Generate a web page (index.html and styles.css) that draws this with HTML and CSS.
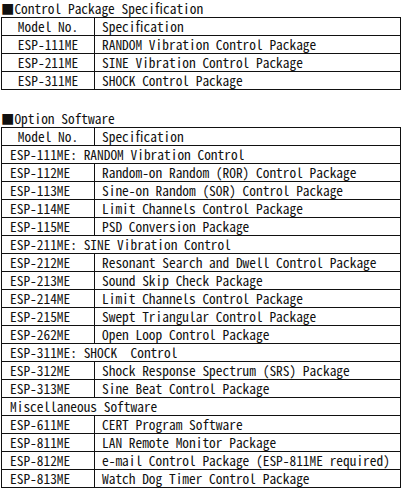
FILE: index.html
```html
<!DOCTYPE html>
<html>
<head>
<meta charset="utf-8">
<link rel="stylesheet" href="styles.css">
</head>
<body>
<div class="page">
  <div class="title">■Control Package Specification</div>
  <table class="spec spec-a">
    <tr><td class="code c">Model No.</td><td class="desc">Specification</td></tr>
    <tr><td class="code c">ESP-111ME</td><td class="desc">RANDOM Vibration Control Package</td></tr>
    <tr><td class="code c">ESP-211ME</td><td class="desc">SINE Vibration Control Package</td></tr>
    <tr><td class="code c">ESP-311ME</td><td class="desc">SHOCK Control Package</td></tr>
  </table>

  <div class="title title-b">■Option Software</div>
  <table class="spec spec-b">
    <tr><td class="code c">Model No.</td><td class="desc">Specification</td></tr>
    <tr><td class="group" colspan="2">ESP-111ME: RANDOM Vibration Control</td></tr>
    <tr><td class="code">ESP-112ME</td><td class="desc">Random-on Random (ROR) Control Package</td></tr>
    <tr><td class="code">ESP-113ME</td><td class="desc">Sine-on Random (SOR) Control Package</td></tr>
    <tr><td class="code">ESP-114ME</td><td class="desc">Limit Channels Control Package</td></tr>
    <tr><td class="code">ESP-115ME</td><td class="desc">PSD Conversion Package</td></tr>
    <tr><td class="group" colspan="2">ESP-211ME: SINE Vibration Control</td></tr>
    <tr><td class="code">ESP-212ME</td><td class="desc">Resonant Search and Dwell Control Package</td></tr>
    <tr><td class="code">ESP-213ME</td><td class="desc">Sound Skip Check Package</td></tr>
    <tr><td class="code">ESP-214ME</td><td class="desc">Limit Channels Control Package</td></tr>
    <tr><td class="code">ESP-215ME</td><td class="desc">Swept Triangular Control Package</td></tr>
    <tr><td class="code">ESP-262ME</td><td class="desc">Open Loop Control Package</td></tr>
    <tr><td class="group" colspan="2">ESP-311ME: SHOCK&nbsp; Control</td></tr>
    <tr><td class="code">ESP-312ME</td><td class="desc">Shock Response Spectrum (SRS) Package</td></tr>
    <tr><td class="code">ESP-313ME</td><td class="desc">Sine Beat Control Package</td></tr>
    <tr><td class="group" colspan="2">Miscellaneous Software</td></tr>
    <tr><td class="code">ESP-611ME</td><td class="desc">CERT Program Software</td></tr>
    <tr><td class="code">ESP-811ME</td><td class="desc">LAN Remote Monitor Package</td></tr>
    <tr><td class="code">ESP-812ME</td><td class="desc">e-mail Control Package (ESP-811ME required)</td></tr>
    <tr><td class="code">ESP-813ME</td><td class="desc">Watch Dog Timer Control Package</td></tr>
  </table>
</div>
</body>
</html>
```

FILE: styles.css
```css
html, body {
  margin: 0;
  padding: 0;
  background: #fff;
}
body {
  font-family: "Noto Sans CJK JP", "DejaVu Sans Mono", monospace;
  font-feature-settings: "hwid" 1;
  font-size: 13.4px;
  color: #111;
}
.page {
  padding: 0 2px 0 1px;
}
.title {
  height: 17px;
  line-height: 17px;
  white-space: pre;
}
.title-b {
  margin-top: 20px;
}
.spec {
  border-collapse: collapse;
  width: 100%;
  table-layout: fixed;
}
.spec td {
  border: 1px solid #111;
  height: 17px;
  padding: 0 0 0 7px;
  line-height: 17px;
  white-space: pre;
  overflow: hidden;
}
.spec td.code {
  width: 92px;
  padding-left: 8px;
}
.spec td.c {
  text-align: center;
  padding: 0;
}
.spec td.group {
  padding-left: 8px;
}
```
